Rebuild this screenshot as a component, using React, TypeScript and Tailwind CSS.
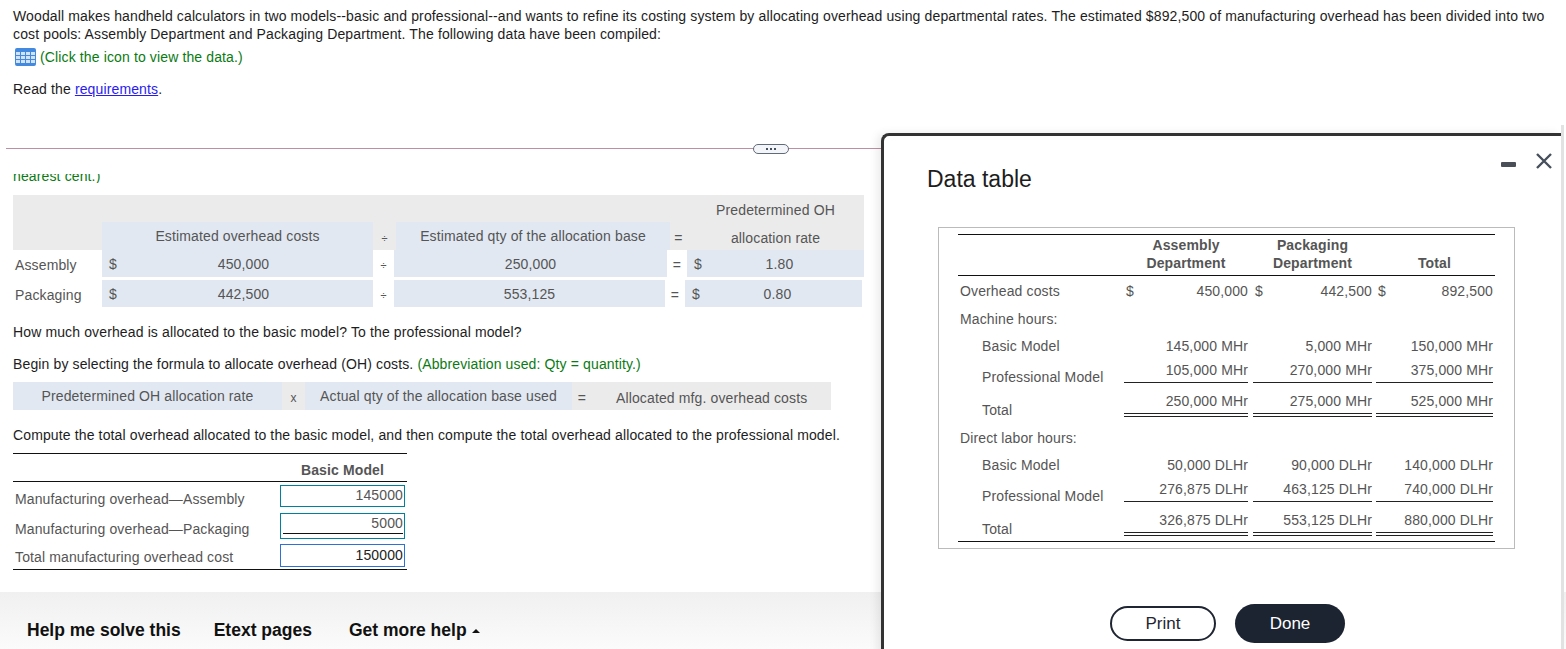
const font = "font-['Liberation_Sans',Arial,sans-serif]";

function DataIcon() {
  return (
    <svg width="21" height="18" viewBox="0 0 21 18" className="shrink-0">
      <rect width="21" height="18" rx="2" fill="#4389de" />
      <g fill="#d3e3f7">
        <rect x="1" y="4" width="4" height="3" />
        <rect x="6" y="4" width="4" height="3" />
        <rect x="11" y="4" width="4" height="3" />
        <rect x="16" y="4" width="4" height="3" />
        <rect x="1" y="8" width="4" height="3" />
        <rect x="6" y="8" width="4" height="3" />
        <rect x="11" y="8" width="4" height="3" />
        <rect x="16" y="8" width="4" height="3" />
        <rect x="1" y="12" width="4" height="3" />
        <rect x="6" y="12" width="4" height="3" />
        <rect x="11" y="12" width="4" height="3" />
        <rect x="16" y="12" width="4" height="3" />
      </g>
    </svg>
  );
}

function RateRow(props: {
  label: string;
  cost: string;
  qty: string;
  rate: string;
  qtyWidth: string;
  end: string;
}) {
  return (
    <div className={"flex h-[27px] items-center text-[#555] " + props.end}>
      <div className="w-[89px] pl-[2px] pt-[3px]">{props.label}</div>
      <div className="relative flex h-full w-[271px] items-center justify-center bg-[#e1e8f2] pl-[12px]">
        <span className="absolute left-[7px]">$</span>
        {props.cost}
      </div>
      <div className="w-[21px] pt-[3px] text-center text-[11px]">÷</div>
      <div className={"flex h-full items-center justify-center bg-[#e1e8f2] " + props.qtyWidth}>{props.qty}</div>
      <div className="w-[20px] pt-[3px] text-center">=</div>
      <div className="relative flex h-full w-[177px] items-center justify-center bg-[#e1e8f2] pl-[8px]">
        <span className="absolute left-[7px]">$</span>
        {props.rate}
      </div>
    </div>
  );
}

function DataRow(props: {
  label: string;
  values?: string[];
  indent?: boolean;
  height: string;
  line?: "single" | "double";
  labelDrop?: string;
}) {
  const widths = ["w-[124px] mr-[5px]", "w-[119px] mr-[4px]", "w-[117px]"];
  const line =
    props.line === "single"
      ? "border-b border-[#222] pb-[3px]"
      : props.line === "double"
        ? "border-b-[4px] border-double border-[#222] pb-[3px]"
        : "";
  return (
    <div className={"flex items-end " + props.height}>
      <div className={"w-[166px] leading-[18px] " + (props.indent ? "pl-[24px] " : "pl-[2px] ") + (props.labelDrop ?? "")}>
        {props.label}
      </div>
      {props.values &&
        props.values.map((v, i) => (
          <div key={i} className={"text-right leading-[18px] " + widths[i] + " " + line}>
            {v}
          </div>
        ))}
    </div>
  );
}

function Money(props: { value: string; width: string; margin?: string }) {
  return (
    <div className={"flex justify-between pl-[2px] " + props.width + " " + (props.margin ?? "")}>
      <span>$</span>
      <span>{props.value}</span>
    </div>
  );
}

export default function App() {
  return (
    <div className={"relative h-[649px] w-[1566px] overflow-hidden bg-white text-[14px] leading-[18px] tracking-[0.13px] text-[#1d1d1d] " + font}>
      <div className="h-[148px] pl-[13px] pr-[10px] pt-[7px]">
        <p className="w-[1540px]">
          Woodall makes handheld calculators in two models--basic and professional--and wants to refine its costing system by allocating overhead using departmental rates. The estimated $892,500 of manufacturing overhead has been divided into two cost pools: Assembly Department and Packaging Department. The following data have been compiled:
        </p>
        <div className="mt-[5px] flex items-center gap-[4px] pl-[2px] text-[#0b7a12]">
          <DataIcon />
          <span>(Click the icon to view the data.)</span>
        </div>
        <p className="mt-[14px]">
          Read the <a href="#" className="text-[#2a1cf0] underline">requirements</a>.
        </p>
      </div>

      <div className="relative ml-[6px] h-px w-[876px] bg-[#bd8fa3]">
        <div className="absolute left-[747px] top-[-4px] flex h-[10px] w-[36px] items-center justify-center gap-[2px] rounded-full border border-[#5f6b78] bg-[#f3f5f8]">
          <span className="h-[2px] w-[2px] bg-[#44505c]" />
          <span className="h-[2px] w-[2px] bg-[#44505c]" />
          <span className="h-[2px] w-[2px] bg-[#44505c]" />
        </div>
      </div>

      <div className="ml-[13px] mt-[25px] h-[9px] overflow-hidden text-[#0b7a12]">
        <div className="mt-[-7px]">nearest cent.)</div>
      </div>

      <div className="ml-[13px] mt-[12px] w-[851px] text-[#555]">
        <div className="flex h-[27px] items-center justify-end bg-[#ebebeb] pt-[3px]">
          <div className="w-[177px] text-center">Predetermined OH</div>
        </div>
        <div className="flex h-[28px] items-center bg-[#ebebeb]">
          <div className="w-[89px]" />
          <div className="flex h-full w-[271px] items-center justify-center bg-[#e1e8f2]">Estimated overhead costs</div>
          <div className="w-[23px] pt-[3px] text-center text-[11px]">÷</div>
          <div className="flex h-full w-[274px] items-center justify-center bg-[#e1e8f2]">Estimated qty of the allocation base</div>
          <div className="w-[17px] pt-[3px] text-center">=</div>
          <div className="w-[177px] pt-[3px] text-center">allocation rate</div>
        </div>
        <RateRow label="Assembly" cost="450,000" qty="250,000" rate="1.80" qtyWidth="w-[273px]" end="" />
        <RateRow label="Packaging" cost="442,500" qty="553,125" rate="0.80" qtyWidth="w-[271px]" end="mt-[3px]" />
      </div>

      <p className="ml-[13px] mt-[16px]">How much overhead is allocated to the basic model? To the professional model?</p>
      <p className="ml-[13px] mt-[14px]">
        Begin by selecting the formula to allocate overhead (OH) costs. <span className="text-[#0b7a12]">(Abbreviation used: Qty = quantity.)</span>
      </p>

      <div className="ml-[13px] mt-[9px] flex h-[28px] w-[818px] items-center bg-[#ebebeb] text-[#555]">
        <div className="flex h-full w-[269px] items-center justify-center bg-[#e1e8f2]">Predetermined OH allocation rate</div>
        <div className="w-[23px] pt-[3px] text-center text-[12px]">x</div>
        <div className="flex h-full w-[267px] items-center justify-center bg-[#e1e8f2]">Actual qty of the allocation base used</div>
        <div className="w-[20px] pt-[3px] text-center">=</div>
        <div className="flex-1 pl-[24px] pt-[3px]">Allocated mfg. overhead costs</div>
      </div>

      <p className="ml-[13px] mt-[16px]">Compute the total overhead allocated to the basic model, and then compute the total overhead allocated to the professional model.</p>

      <div className="ml-[13px] mt-[9px] w-[394px] border-b border-t border-[#111] text-[#555]">
        <div className="flex h-[28px] items-center justify-end border-b border-[#111] pr-[2px] pt-[5px]">
          <div className="w-[125px] text-center font-bold">Basic Model</div>
        </div>
        <div className="flex h-[26px] items-end">
          <div className="w-[267px] pl-[2px]">Manufacturing overhead—Assembly</div>
          <div className="mb-[1px] h-[22px] w-[125px] border border-[#00809d] pr-[1px] text-right leading-[18px]">145000</div>
        </div>
        <div className="mt-[5px] flex h-[26px] items-center">
          <div className="w-[267px] pl-[2px] pt-[6px]">Manufacturing overhead—Packaging</div>
          <div className="h-[26px] w-[125px] border border-[#00809d] px-[2px] text-right">
            <div className="mr-[-1px] h-[20px] border-b border-[#111] leading-[18px]">5000</div>
          </div>
        </div>
        <div className="mt-[5px] flex h-[25px] items-start">
          <div className="w-[267px] pl-[2px] pt-[4px]">Total manufacturing overhead cost</div>
          <div className="h-[23px] w-[125px] border border-[#2f6fd6] pr-[1px] text-right leading-[20px] text-[#222]">150000</div>
        </div>
      </div>

      <div className="mt-[22px] flex h-[57px] items-center bg-gradient-to-b from-[#f0f0f0] to-[#fbfbfb] pl-[27px] pt-[18px] text-[17.5px] font-bold tracking-normal text-[#111]">
        <span>Help me solve this</span>
        <span className="ml-[33px]">Etext pages</span>
        <span className="ml-[37px] flex items-center gap-[5px]">
          Get more help
          <span className="mt-[2px] h-0 w-0 border-x-[4px] border-b-[4px] border-x-transparent border-b-[#111]" />
        </span>
      </div>

      {/* data window sits over the page */}
      <div className="absolute left-[881px] top-[133px] h-[530px] w-[680px] rounded-tl-[8px] border-l-[3px] border-t-[3px] border-[#333] bg-white shadow-[-4px_0_8px_rgba(0,0,0,0.08)]">
        <div className="absolute left-[43px] top-[28px] text-[23px] leading-[30px] tracking-normal text-[#1d1d1d]">Data table</div>
        <div className="absolute left-[617px] top-[26px] h-[5px] w-[15px] rounded-[1px] bg-[#4a4f57]" />
        <svg className="absolute left-[651px] top-[16px]" width="18" height="18" viewBox="0 0 18 18">
          <path d="M2 2 L16 16 M16 2 L2 16" stroke="#46505c" strokeWidth="2.4" fill="none" />
        </svg>

        <div className="ml-[54px] mt-[91px] h-[322px] w-[577px] border border-[#bbb] pl-[19px] pr-[19px] pt-[6px] text-[#555]">
          <div className="flex h-[42px] items-end border-b border-t border-[#111] pb-[3px] font-bold leading-[18px]">
            <div className="w-[166px]" />
            <div className="mr-[5px] w-[124px] text-center">Assembly<br />Department</div>
            <div className="mr-[4px] w-[119px] text-center">Packaging<br />Department</div>
            <div className="w-[117px] text-center">Total</div>
          </div>
          <div className="flex h-[29px] items-end pb-[5px]">
            <div className="w-[166px] pl-[2px]">Overhead costs</div>
            <Money value="450,000" width="w-[124px]" margin="mr-[5px]" />
            <Money value="442,500" width="w-[119px]" margin="mr-[4px]" />
            <Money value="892,500" width="w-[117px]" />
          </div>
          <DataRow label="Machine hours:" height="h-[23px]" />
          <DataRow label="Basic Model" indent values={["145,000 MHr", "5,000 MHr", "150,000 MHr"]} height="h-[27px]" />
          <DataRow label="Professional Model" indent values={["105,000 MHr", "270,000 MHr", "375,000 MHr"]} height="h-[28px]" line="single" labelDrop="mb-[-3px]" />
          <DataRow label="Total" indent values={["250,000 MHr", "275,000 MHr", "525,000 MHr"]} height="h-[34px]" line="double" labelDrop="mb-[-2px]" />
          <DataRow label="Direct labor hours:" height="h-[30px]" />
          <DataRow label="Basic Model" indent values={["50,000 DLHr", "90,000 DLHr", "140,000 DLHr"]} height="h-[27px]" />
          <DataRow label="Professional Model" indent values={["276,875 DLHr", "463,125 DLHr", "740,000 DLHr"]} height="h-[28px]" line="single" labelDrop="mb-[-3px]" />
          <DataRow label="Total" indent values={["326,875 DLHr", "553,125 DLHr", "880,000 DLHr"]} height="h-[34px]" line="double" labelDrop="mb-[-2px]" />
          <div className="mt-[5px] border-t border-[#111]" />
        </div>

        <div className="ml-[226px] mt-[55px] flex items-center gap-[19px] text-[17px] tracking-normal">
          <button className="h-[35px] w-[106px] rounded-full border-2 border-[#1f2532] text-[#1f2532]">Print</button>
          <button className="h-[39px] w-[110px] rounded-full bg-[#1c2331] text-white">Done</button>
        </div>
      </div>
      <div className="absolute right-[2px] top-[125px] h-[524px] w-[3px] bg-[#e2e2e2]" />
    </div>
  );
}
